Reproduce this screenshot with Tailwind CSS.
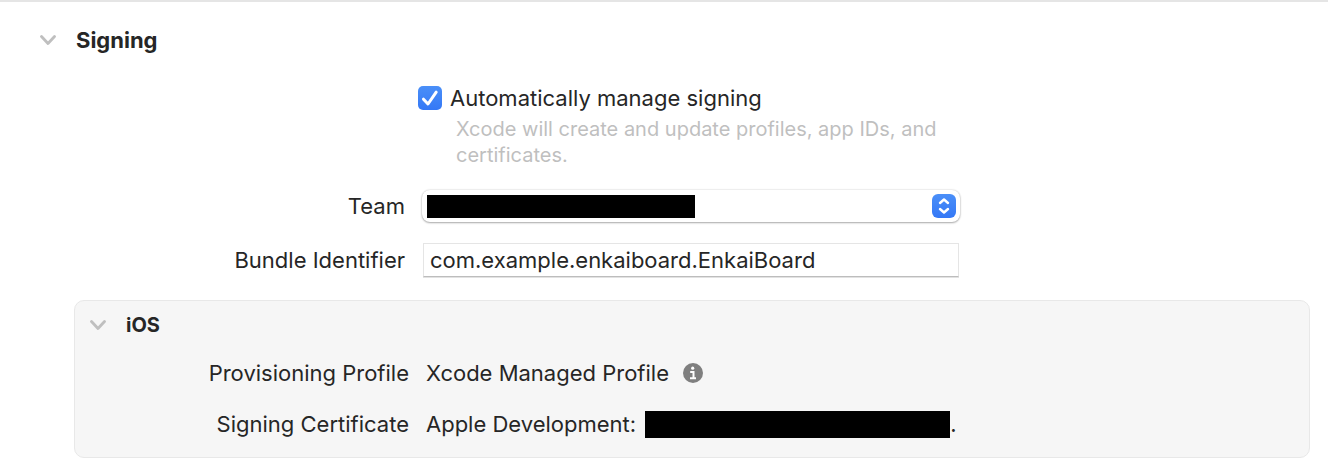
<!DOCTYPE html>
<html lang="en">

<head>
    <meta charset="UTF-8">
    <meta name="viewport" content="width=device-width, initial-scale=1.0">
    <title>Signing</title>
    <script src="https://cdn.jsdelivr.net/npm/@tailwindcss/browser@4"></script>
</head>

<body class="bg-white font-['Inter',sans-serif] text-[22px] leading-7 text-[#262626]">
    <main class="border-t-2 border-[#e5e5e5] pt-6 pb-4">
        <!-- Section header -->
        <header class="flex items-center gap-5 pl-10">
            <button type="button" aria-label="Toggle Signing">
                <svg class="block w-4 h-4" viewBox="0 0 16 16" fill="none" stroke="#bfbfbf" stroke-width="2.8"
                    stroke-linecap="round" stroke-linejoin="round">
                    <path d="M1.5 4.5 8 11.5l6.5-7" />
                </svg>
            </button>
            <h2 class="font-bold">Signing</h2>
        </header>

        <form class="pt-[30px]">
            <!-- Automatic signing -->
            <div class="pl-[418px]">
                <div class="flex items-center gap-2">
                    <span class="grid w-6 h-6">
                        <input type="checkbox" id="auto-signing" checked
                            class="col-start-1 row-start-1 w-6 h-6 appearance-none rounded-[5px] bg-linear-to-b from-[#4a8ff8] to-[#3478f6]">
                        <svg class="col-start-1 row-start-1 w-6 h-6 pointer-events-none" viewBox="0 0 24 24" fill="none"
                            stroke="#fff" stroke-width="3" stroke-linecap="round" stroke-linejoin="round">
                            <path d="M5.5 13.2 10 18l8.2-11.8" />
                        </svg>
                    </span>
                    <label for="auto-signing">Automatically manage signing</label>
                </div>
                <p class="max-w-[560px] pt-1 pl-[38px] text-[20px] leading-[26px] text-[#bfbfbf]">Xcode will create and update
                    profiles, app IDs, and<br>certificates.</p>
            </div>

            <!-- Team -->
            <div class="flex items-center gap-[17px] pt-[22px]">
                <label for="team" class="w-[405px] text-right">Team</label>
                <div class="relative w-[538px]">
                    <select id="team"
                        class="block w-full h-8 appearance-none rounded-[8px] bg-white shadow-[0_1px_2px_rgba(0,0,0,0.3),0_0_2px_rgba(0,0,0,0.2)]">
                        <option selected></option>
                    </select>
                    <span class="absolute left-[5px] top-[5px] w-[268px] h-[23px] bg-black pointer-events-none"></span>
                    <svg class="absolute right-1 top-1 w-6 h-6 pointer-events-none" viewBox="0 0 24 24" fill="none"
                        stroke="#fff" stroke-width="2.4" stroke-linecap="round" stroke-linejoin="round">
                        <defs>
                            <linearGradient id="blue" x1="0" y1="0" x2="0" y2="1">
                                <stop offset="0" stop-color="#4a8ff8" />
                                <stop offset="1" stop-color="#3478f6" />
                            </linearGradient>
                        </defs>
                        <rect width="24" height="24" rx="6" fill="url(#blue)" stroke="none" />
                        <path d="M8 9 12 5.5 16 9M8 15l4 3.5 4-3.5" />
                    </svg>
                </div>
            </div>

            <!-- Bundle identifier -->
            <div class="flex items-center gap-[18px] pt-[21px]">
                <label for="bundle" class="w-[405px] text-right">Bundle Identifier</label>
                <input type="text" id="bundle" value="com.example.enkaiboard.EnkaiBoard"
                    class="w-[536px] h-[34px] px-1.5 border border-[#e5e5e5] border-b-[#bdbdbd] bg-white shadow-[0_1px_0_#e2e2e2] outline-none">
            </div>
        </form>

        <!-- iOS signing details -->
        <section class="mt-[23px] mr-[18px] ml-[74px] pt-2.5 pb-[19px] rounded-[10px] border border-[#e8e8e8] bg-[#f6f6f6]">
            <header class="flex items-center gap-5 pl-[15px]">
                <button type="button" aria-label="Toggle iOS">
                    <svg class="block w-4 h-4" viewBox="0 0 16 16" fill="none" stroke="#bfbfbf" stroke-width="2.8"
                        stroke-linecap="round" stroke-linejoin="round">
                        <path d="M1.5 4.5 8 11.5l6.5-7" />
                    </svg>
                </button>
                <h3 class="text-[20px] font-bold">iOS</h3>
            </header>

            <dl class="grid grid-cols-[334px_1fr] gap-x-[17px] gap-y-[23px] pt-5">
                <dt class="text-right">Provisioning Profile</dt>
                <dd class="flex items-center gap-[14px]">
                    Xcode Managed Profile
                    <button type="button" aria-label="Profile info">
                        <svg class="block w-5 h-5" viewBox="0 0 20 20">
                            <circle cx="10" cy="10" r="10" fill="#7f7f7f" />
                            <circle cx="9.7" cy="5.2" r="1.6" fill="#fff" />
                            <path d="M7.2 9h3.3v6M7 15.2h6" fill="none" stroke="#fff" stroke-width="2" />
                        </svg>
                    </button>
                </dd>
                <dt class="text-right">Signing Certificate</dt>
                <dd class="flex items-center">
                    Apple Development:
                    <span class="ml-[9px] w-[305px] h-[27px] bg-black"></span>.
                </dd>
            </dl>
        </section>
    </main>
</body>

</html>
